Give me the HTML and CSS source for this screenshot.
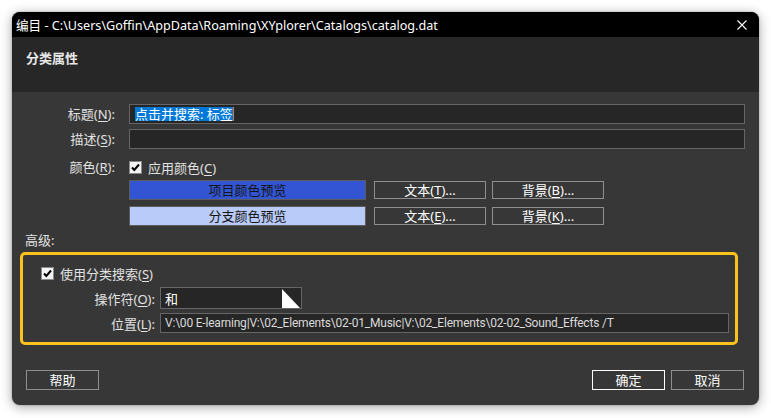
FILE: index.html
```html
<!DOCTYPE html>
<html lang="zh">
<head>
<meta charset="utf-8">
<title>编目</title>
<link rel="stylesheet" href="styles.css">
</head>
<body>
<div class="window">
  <div class="titlebar">
    <span class="title">编目 - C:\Users\Goffin\AppData\Roaming\XYplorer\Catalogs\catalog.dat</span>
    <svg class="close" width="10" height="10" viewBox="0 0 10 10"><path d="M0.5 0.5 L9.5 9.5 M9.5 0.5 L0.5 9.5" stroke="#fff" stroke-width="1.1" fill="none"/></svg>
  </div>
  <div class="header"><span class="header-title">分类属性</span></div>
  <div class="body">
    <div class="row r1">
      <span class="lbl">标题(<u>N</u>):</span>
      <div class="input wide"><span class="sel">点击并搜索: 标签</span><span class="caret"></span></div>
    </div>
    <div class="row r2">
      <span class="lbl">描述(<u>S</u>):</span>
      <div class="input wide"></div>
    </div>
    <div class="row r3">
      <span class="lbl">颜色(<u>R</u>):</span>
      <span class="check"><svg width="11" height="11" viewBox="0 0 11 11"><path d="M2 5.5 L4.3 8 L9 2.5" stroke="#000" stroke-width="2" fill="none"/></svg></span>
      <span class="chk-text">应用颜色(<u>C</u>)</span>
    </div>
    <div class="row r4">
      <span class="lbl"></span>
      <div class="preview item">项目颜色预览</div>
      <div class="btn b-text">文本(<u>T</u>)...</div>
      <div class="btn b-bg">背景(<u>B</u>)...</div>
    </div>
    <div class="row r5">
      <span class="lbl"></span>
      <div class="preview branch">分支颜色预览</div>
      <div class="btn b-text">文本(<u>E</u>)...</div>
      <div class="btn b-bg">背景(<u>K</u>)...</div>
    </div>
    <div class="adv">高级:</div>
    <div class="group">
      <div class="grow g1">
        <span class="check"><svg width="11" height="11" viewBox="0 0 11 11"><path d="M2 5.5 L4.3 8 L9 2.5" stroke="#000" stroke-width="2" fill="none"/></svg></span>
        <span class="chk-text">使用分类搜索(<u>S</u>)</span>
      </div>
      <div class="grow g2">
        <span class="glbl">操作符(<u>O</u>):</span>
        <div class="combo"><span>和</span><svg class="tri" width="18" height="19" viewBox="0 0 18 19"><path d="M0 0 L18 19 L0 19 Z" fill="#fff"/></svg></div>
      </div>
      <div class="grow g3">
        <span class="glbl">位置(<u>L</u>):</span>
        <div class="input path">V:\00 E-learning|V:\02_Elements\02-01_Music|V:\02_Elements\02-02_Sound_Effects /T</div>
      </div>
    </div>
    <div class="footer">
      <div class="btn fbtn">帮助</div>
      <div class="spacer"></div>
      <div class="btn fbtn ok">确定</div>
      <div class="btn fbtn">取消</div>
    </div>
  </div>
</div>
</body>
</html>
```

FILE: styles.css
```css
html, body {
  margin: 0;
  padding: 0;
  background: #ffffff;
}
body {
  width: 771px;
  height: 418px;
  overflow: hidden;
  font-family: "Segoe UI", "Noto Sans", "Noto Sans CJK SC", sans-serif;
  font-size: 13px;
}
.window {
  margin: 12px 0 0 12px;
  width: 747px;
  height: 393px;
  border-radius: 8px;
  overflow: hidden;
  box-shadow: 0 2px 12px rgba(0,0,0,0.35), 0 0 2px rgba(0,0,0,0.3);
  display: flex;
  flex-direction: column;
  background: #373737;
}
.titlebar {
  height: 25px;
  background: #000;
  display: flex;
  align-items: center;
  padding-left: 4px;
  padding-right: 12px;
}
.title {
  color: #fff;
  font-size: 12.6px;
  flex: 1;
  white-space: nowrap;
}
.close { display: block; }
.header {
  height: 55px;
  background: #272727;
  box-sizing: border-box;
  padding: 12px 14px 0;
}
.header-title {
  color: #e8e8e8;
  font-weight: bold;
  font-size: 13px;
  line-height: 18px;
}
.body {
  flex: 1;
  display: flex;
  flex-direction: column;
  padding: 12px 14px 15px 0;
  color: #e2e2e2;
}
.row {
  display: flex;
  align-items: center;
  height: 20px;
}
.r2 { margin-top: 5px; }
.r3 { margin-top: 8px; }
.r4 { margin-top: 3px; }
.r5 { margin-top: 6px; }
.lbl {
  width: 103px;
  margin-right: 14px;
  text-align: right;
  white-space: nowrap;
  line-height: 20px;
}
.input {
  box-sizing: border-box;
  height: 20px;
  background: #262626;
  border: 1px solid #656565;
  display: flex;
  align-items: center;
}
.wide { flex: 1; padding-left: 5px; }
.sel {
  background: #0078d7;
  color: #fff;
  line-height: 14px;
  white-space: nowrap;
}
.caret {
  width: 1px;
  height: 14px;
  background: #e07a2a;
}
.check {
  width: 13px;
  height: 13px;
  box-sizing: border-box;
  border: 1px solid #8a8a8a;
  background: #f4f4f4;
  display: inline-flex;
  align-items: center;
  justify-content: center;
}
.check svg { display: block; }
.chk-text {
  margin-left: 6px;
  white-space: nowrap;
}
.preview {
  box-sizing: border-box;
  width: 237px;
  height: 20px;
  border: 1px solid #5c5c5c;
  color: #151515;
  text-align: center;
  line-height: 18px;
}
.item { background: #3355d4; }
.branch { background: #b9cbf9; }
.btn {
  box-sizing: border-box;
  border: 1px solid #8e8e8e;
  color: #fff;
  text-align: center;
  white-space: nowrap;
}
.b-text, .b-bg {
  width: 112px;
  height: 18px;
  line-height: 16px;
}
.b-text { margin-left: 8px; }
.b-bg { margin-left: 6px; }
.adv {
  margin-top: 6px;
  margin-left: 13px;
  line-height: 16px;
  height: 16px;
}
.group {
  margin-top: 4px;
  margin-left: 8px;
  width: 718px;
  height: 93px;
  box-sizing: border-box;
  border: 3px solid #fcc21c;
  border-radius: 5px;
  padding: 10px 0 0 0;
}
.grow {
  display: flex;
  align-items: center;
}
.g1 { height: 16px; padding-left: 18px; }
.g2 { height: 22px; margin-top: 6px; }
.g3 { height: 20px; margin-top: 4px; }
.glbl {
  width: 132px;
  margin-right: 5px;
  text-align: right;
  white-space: nowrap;
}
.combo {
  box-sizing: border-box;
  width: 142px;
  height: 22px;
  background: #262626;
  border: 1px solid #656565;
  display: flex;
  align-items: center;
  padding-left: 4px;
  color: #fff;
}
.combo span { flex: 1; }
.tri { display: block; margin-right: 1px; }
.path {
  width: 569px;
  padding-left: 4px;
  font-family: "Roboto", "Noto Sans", sans-serif;
  font-size: 12px;
  letter-spacing: -0.2px;
  color: #dadada;
  white-space: nowrap;
  overflow: hidden;
}
.footer {
  margin-top: 25px;
  display: flex;
  height: 20px;
}
.spacer { flex: 1; }
.fbtn {
  width: 73px;
  height: 20px;
  line-height: 18px;
}
.footer .fbtn:first-child { margin-left: 14px; }
.footer .fbtn:last-child { margin-left: 6px; margin-right: 1px; }
.ok { border-color: #ffffff; }
u { text-underline-offset: 2px; }
```
